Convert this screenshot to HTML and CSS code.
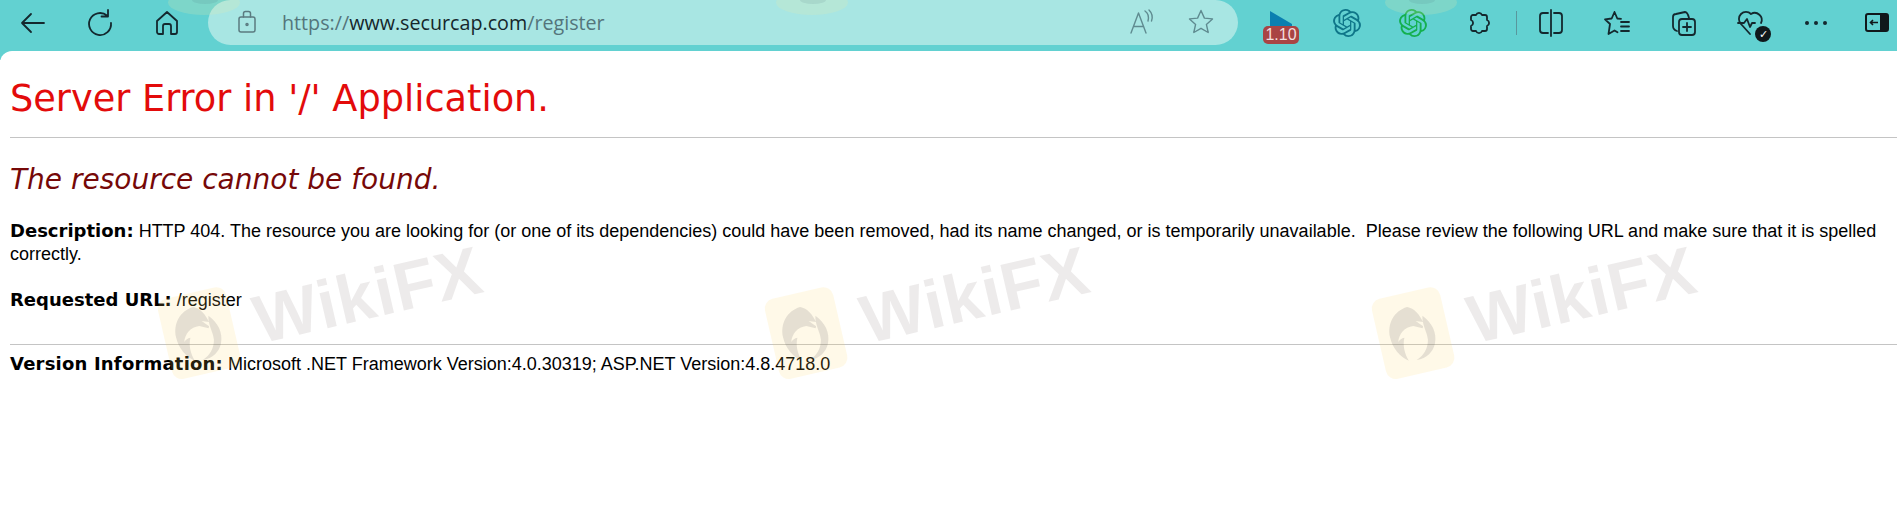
FILE: index.html
```html
<!DOCTYPE html>
<html lang="en">

<head>
    <meta charset="UTF-8">
    <title>The resource cannot be found.</title>
    <link rel="stylesheet" href="styles.css">
</head>

<body>
    <div class="toolbar">
        <div class="nav-icons">
            <svg class="icon" viewBox="0 0 28 28"><path d="M25 14H3M12 5l-9 9 9 9" /></svg>
            <svg class="icon" viewBox="0 0 28 28"><path d="M21 6.500A11 11 0 1 0 25 14M22 1v6.500h-6.500" /></svg>
            <svg class="icon" viewBox="0 0 28 28"><path d="M4 12 14 3l10 9v11a2 2 0 0 1-2 2h-4v-8a2 2 0 0 0-2-2h-4a2 2 0 0 0-2 2v8H6a2 2 0 0 1-2-2z" /></svg>
        </div>
        <div class="address-bar">
            <svg class="icon lock" viewBox="0 0 20 24"><rect x="2" y="7" width="16" height="15" rx="2" /><path d="M6.500 7V3.500a2 2 0 0 1 2-2h3a2 2 0 0 1 2 2V7" /><circle cx="10" cy="14.500" r="1" /></svg>
            <div class="url">https://<span class="domain">www.securcap.com</span>/register</div>
            <svg class="icon read" viewBox="0 0 28 28"><path d="M3 25 10.500 5 18 25M5.500 18.500h10M17 3c3 2 4 6 3 10M21 2c3 3 4 7 2.500 11" /></svg>
            <svg class="icon star" viewBox="0 0 28 28"><path d="m14 2.500 3.400 7.600 8.100.8-6.100 5.500 1.800 8.100-7.200-4.200-7.200 4.200 1.800-8.100-6.100-5.500 8.100-.8z" /></svg>
        </div>
        <div class="ext-icons">
            <div class="speed">
                <svg viewBox="0 0 24 16"><path d="M2 0 24 13v3H2z" fill="#0b7fb0" /></svg>
                <span class="badge">1.10</span>
            </div>
            <svg class="knot gpt-blue" viewBox="0 0 24 24"><use href="#knot" /></svg>
            <svg class="knot gpt-green" viewBox="0 0 24 24"><use href="#knot" /></svg>
            <svg class="icon" viewBox="0 0 28 28"><path d="M11 6a3.200 3.200 0 0 1 6 0h3a2 2 0 0 1 2 2v3a3.200 3.200 0 0 1 0 6v3a2 2 0 0 1-2 2h-3a3.200 3.200 0 0 1-6 0H8a2 2 0 0 1-2-2v-3a3.200 3.200 0 0 0 0-6V8a2 2 0 0 1 2-2z" /></svg>
            <div class="divider"></div>
            <svg class="icon" viewBox="0 0 28 28"><path d="M11 4H6a3 3 0 0 0-3 3v14a3 3 0 0 0 3 3h5M17 4h5a3 3 0 0 1 3 3v14a3 3 0 0 1-3 3h-5M14 1v26" /></svg>
            <svg class="icon" viewBox="0 0 28 28"><path d="m11.500 3-2.800 6.500-6.700.8 5 4.700L5.500 25l6-3.500 3 1.800M11.500 3l2.800 6.500 3.700.4M18 13h8M18 17.500h8M18 22h8" /></svg>
            <svg class="icon" viewBox="0 0 28 28"><rect x="10" y="10" width="16" height="16" rx="3" /><path d="M18 14v8M14 18h8M8 22c-3-1-4-3-4-5V8a3 3 0 0 1 3-3l9-2c2 0 3 2 4 6" /></svg>
            <div class="health">
                <svg class="icon" viewBox="0 0 28 28"><path d="M13 25 4 15a7 7 0 0 1 10-10 7 7 0 0 1 10 9M1 14h6l3-4 3 8 2-4h3" /></svg>
                <span class="check">✓</span>
            </div>
            <div class="more"><i></i><i></i><i></i></div>
            <div class="sidebar-toggle">
                <svg viewBox="0 0 14 15"><path d="M11 7.500H3.500M6 5 3.500 7.500 6 10" /></svg>
            </div>
        </div>
        <div class="bleed bleed-1"></div>
        <div class="bleed bleed-2"></div>
        <div class="bleed bleed-3"></div>
    </div>

    <svg class="defs" width="0" height="0">
        <symbol id="knot" viewBox="0 0 24 24">
            <path fill="currentColor" d="M22.2819 9.8211a5.9847 5.9847 0 0 0-.5157-4.9108 6.0462 6.0462 0 0 0-6.5098-2.9A6.0651 6.0651 0 0 0 4.9807 4.1818a5.9847 5.9847 0 0 0-3.9977 2.9 6.0462 6.0462 0 0 0 .7427 7.0966 5.98 5.98 0 0 0 .511 4.9107 6.051 6.051 0 0 0 6.5146 2.9001A5.9847 5.9847 0 0 0 13.2599 24a6.0557 6.0557 0 0 0 5.7718-4.2058 5.9894 5.9894 0 0 0 3.9977-2.9001 6.0557 6.0557 0 0 0-.7475-7.0729zm-9.022 12.6081a4.4755 4.4755 0 0 1-2.8764-1.0408l.1419-.0804 4.7783-2.7582a.7948.7948 0 0 0 .3927-.6813v-6.7369l2.02 1.1686a.071.071 0 0 1 .038.052v5.5826a4.504 4.504 0 0 1-4.4945 4.4944zm-9.6607-4.1254a4.4708 4.4708 0 0 1-.5346-3.0137l.142.0852 4.783 2.7582a.7712.7712 0 0 0 .7806 0l5.8428-3.3685v2.3324a.0804.0804 0 0 1-.0332.0615L9.74 19.9502a4.4992 4.4992 0 0 1-6.1408-1.6464zM2.3408 7.8956a4.485 4.485 0 0 1 2.3655-1.9728V11.6a.7664.7664 0 0 0 .3879.6765l5.8144 3.3543-2.0201 1.1685a.0757.0757 0 0 1-.071 0l-4.8303-2.7865A4.504 4.504 0 0 1 2.3408 7.872zm16.5963 3.8558L13.1038 8.364 15.1192 7.2a.0757.0757 0 0 1 .071 0l4.8303 2.7913a4.4944 4.4944 0 0 1-.6765 8.1042v-5.6772a.79.79 0 0 0-.407-.667zm2.0107-3.0231l-.142-.0852-4.7735-2.7818a.7759.7759 0 0 0-.7854 0L9.409 9.2297V6.8974a.0662.0662 0 0 1 .0284-.0615l4.8303-2.7866a4.4992 4.4992 0 0 1 6.6802 4.66zM8.3065 12.863l-2.02-1.1638a.0804.0804 0 0 1-.038-.0567V6.0742a4.4992 4.4992 0 0 1 7.3757-3.4537l-.142.0805L8.704 5.459a.7948.7948 0 0 0-.3927.6813zm1.0976-2.3654l2.602-1.4998 2.6069 1.4998v2.9994l-2.5974 1.4997-2.6067-1.4997Z" />
        </symbol>
        <symbol id="eagle" viewBox="0 0 60 70">
            <path d="M30 4C14 5 3 18 3 34c0 13 6 24 15 31-3-9-3-19 1-27-3 0-6 1-8 3 3-9 11-15 21-14l10 5 1-2-7-8 8 3C42 16 38 7 30 4z" fill="currentColor" />
            <path d="M45 18c9 10 12 23 7 34-4 9-13 15-25 14 9-3 16-10 18-20 1-9-3-19 0-28z" fill="currentColor" />
        </symbol>
    </svg>

    <div class="page">
        <h1>Server Error in '/' Application.</h1>
        <hr>
        <h2>The resource cannot be found.</h2>
        <p class="description"><b>Description:</b> HTTP 404. The resource you are looking for (or one of its dependencies) could have been removed, had its name changed, or is temporarily unavailable. &nbsp;Please review the following URL and make sure that it is spelled correctly.</p>
        <p class="requested"><b>Requested URL:</b> /register</p>
        <hr class="rule-bottom">
        <p class="version"><b>Version Information:</b> Microsoft .NET Framework Version:4.0.30319; ASP.NET Version:4.8.4718.0</p>

        <div class="mark mark-1"><div class="mark-logo"><svg viewBox="0 0 60 70"><use href="#eagle" /></svg></div><span>WikiFX</span></div>
        <div class="mark mark-2"><div class="mark-logo"><svg viewBox="0 0 60 70"><use href="#eagle" /></svg></div><span>WikiFX</span></div>
        <div class="mark mark-3"><div class="mark-logo"><svg viewBox="0 0 60 70"><use href="#eagle" /></svg></div><span>WikiFX</span></div>
    </div>
</body>

</html>
```

FILE: styles.css
```css
* {
    box-sizing: border-box;
}

html,
body {
    height: 100%;
}

body {
    margin: 0;
    background: #fff;
    overflow: hidden;
    font-family: 'Liberation Sans', Arial, sans-serif;
}

.defs {
    position: absolute;
}

.toolbar {
    position: relative;
    height: 60px;
    margin-bottom: -9px;
    display: flex;
    align-items: flex-start;
    background: #62d1d1;
    overflow: hidden;
}

.icon {
    width: 28px;
    height: 28px;
    flex: none;
    fill: none;
    stroke: #14282e;
    stroke-width: 1.8;
    stroke-linecap: round;
    stroke-linejoin: round;
}

.knot {
    width: 28px;
    height: 28px;
    flex: none;
}

.nav-icons {
    display: flex;
    gap: 39px;
    width: 208px;
    padding: 9px 0 0 19px;
}

.address-bar {
    width: 1030px;
    height: 45px;
    display: flex;
    align-items: center;
    padding: 0 23px 1px 29px;
    background: #a8e6e3;
    border-radius: 23px;
}

.lock {
    width: 20px;
    height: 26px;
    stroke: #5b7b80;
    stroke-width: 1.5;
}

.url {
    flex: 1;
    margin-left: 25px;
    font-family: 'Open Sans', sans-serif;
    font-size: 19.700px;
    color: #54757b;
    white-space: nowrap;
}

.domain {
    color: #15262b;
}

.read,
.star {
    stroke: #5f8b90;
    stroke-width: 1.4;
}

.read {
    margin-right: 31px;
}

.ext-icons {
    display: flex;
    align-items: center;
    height: 45px;
    padding-left: 25px;
}

.ext-icons > * {
    margin-right: 38px;
}

.speed {
    position: relative;
    width: 36px;
    height: 45px;
    margin-right: 34px;
}

.speed svg {
    position: absolute;
    left: 5px;
    top: 11px;
    width: 24px;
    height: 16px;
}

.badge {
    position: absolute;
    left: 0;
    top: 26px;
    width: 36px;
    height: 18px;
    background: #a94444;
    border-radius: 5px;
    color: #f2dede;
    font-size: 16px;
    line-height: 18px;
    text-align: center;
}

.gpt-blue {
    color: #0f7689;
}

.gpt-green {
    color: #14b04f;
}

.divider {
    width: 1px;
    height: 24px;
    margin: 0 20px 0 -15px;
    background: #58979d;
}

.health {
    position: relative;
    width: 28px;
    height: 28px;
    margin-left: 2px;
}

.check {
    position: absolute;
    right: -6px;
    bottom: -5px;
    width: 16px;
    height: 16px;
    border-radius: 50%;
    background: #10181b;
    color: #fff;
    font-size: 11px;
    line-height: 16px;
    text-align: center;
}

.more {
    display: flex;
    gap: 5px;
    width: 22px;
    margin-left: 2px;
    margin-right: 38px;
}

.more i {
    width: 4px;
    height: 4px;
    flex: none;
    border-radius: 50%;
    background: #14282e;
}

.sidebar-toggle {
    width: 24px;
    height: 19px;
    margin: 0;
    border: 2px solid #10181b;
    border-radius: 3px;
    background: linear-gradient(90deg, transparent 66%, #10181b 66%);
}

.sidebar-toggle svg {
    display: block;
    width: 14px;
    height: 15px;
    fill: none;
    stroke: #10181b;
    stroke-width: 1.6;
}

.bleed {
    position: absolute;
    top: -10px;
    width: 72px;
    height: 25px;
    border-radius: 50%;
    background: rgba(235, 235, 170, 0.2);
}

.bleed::after {
    content: "";
    position: absolute;
    left: 24px;
    top: 6px;
    width: 26px;
    height: 8px;
    border-radius: 50%;
    background: rgba(70, 110, 120, 0.12);
}

.bleed-1 {
    left: 168px;
}

.bleed-2 {
    left: 776px;
}

.bleed-3 {
    left: 1385px;
}

.page {
    position: relative;
    height: calc(100% - 51px);
    padding: 20px 10px 0;
    background: #fff;
    border-top-left-radius: 12px;
    color: #000;
    font-size: 18px;
    overflow: hidden;
}

h1,
h2 {
    margin: 0;
    font-family: 'DejaVu Sans', Verdana, sans-serif;
    font-weight: normal;
}

h1 {
    font-size: 36.700px;
    line-height: 55px;
    color: #e30b0b;
}

h2 {
    margin-top: 24px;
    font-size: 28px;
    font-style: italic;
    line-height: 36px;
    color: #760808;
}

hr {
    height: 1px;
    margin: 11px -10px 0 0;
    border: 0;
    background: #c4c4c4;
}

p {
    margin: 0;
    line-height: 23px;
}

b {
    font-family: 'DejaVu Sans', Verdana, sans-serif;
    font-size: 18px;
}

.description {
    margin-top: 21px;
}

.requested {
    margin-top: 22px;
}

.rule-bottom {
    margin-top: 32px;
}

.version {
    margin-top: 7px;
}

.version b {
    letter-spacing: 0.200px;
}

.mark {
    position: absolute;
    display: flex;
    align-items: center;
    gap: 22px;
    transform: rotate(-13deg);
    transform-origin: left center;
    pointer-events: none;
}

.mark span {
    font-family: 'Liberation Sans', Arial, sans-serif;
    font-size: 68px;
    font-weight: bold;
    letter-spacing: 1px;
    color: rgba(90, 70, 70, 0.11);
}

.mark-logo {
    width: 70px;
    height: 82px;
    padding: 9px;
    border-radius: 10px;
    background: rgba(255, 215, 90, 0.14);
    color: rgba(70, 70, 80, 0.14);
}

.mark-logo svg {
    display: block;
    width: 100%;
    height: 100%;
}

.mark-1 {
    left: 165px;
    top: 249px;
}

.mark-2 {
    left: 772px;
    top: 249px;
}

.mark-3 {
    left: 1379px;
    top: 249px;
}
```
